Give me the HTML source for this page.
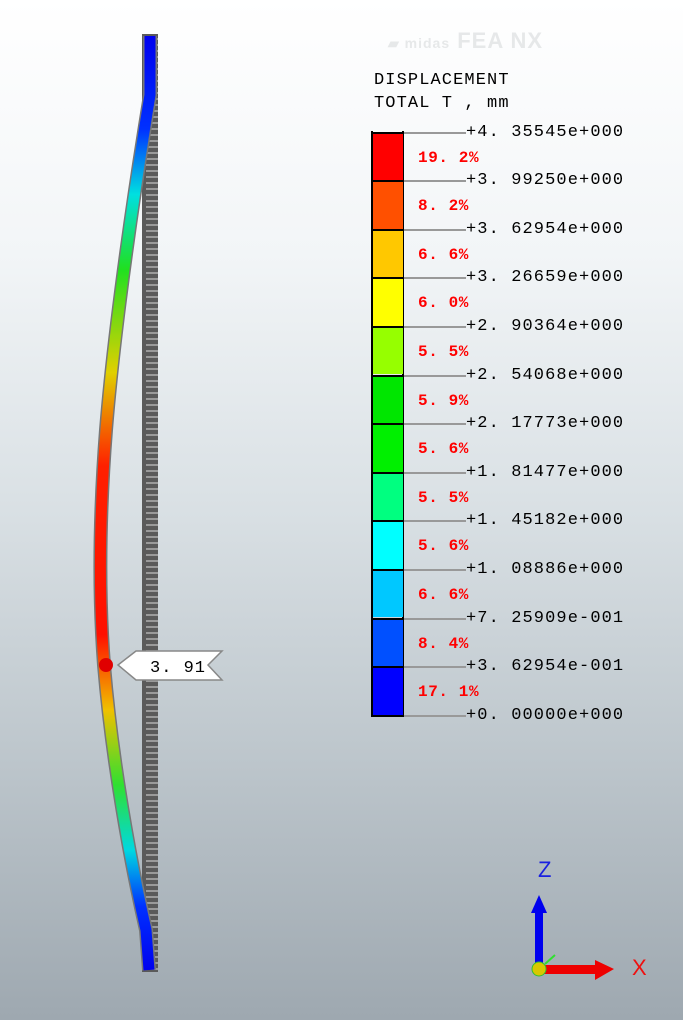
<!DOCTYPE html>
<html><head><style>
html,body{margin:0;padding:0}
body{width:683px;height:1020px;position:relative;overflow:hidden;
background:linear-gradient(to bottom,#ffffff 0%,#f2f5f7 25%,#d9e0e4 50%,#bcc5cb 75%,#9ea8b0 100%);
font-family:"Liberation Mono",monospace;}
.t{position:absolute;font-size:17px;letter-spacing:1.1px;color:#000;line-height:1;white-space:pre}
.p{position:absolute;font-size:16px;letter-spacing:0.6px;color:#ff0000;line-height:1;font-weight:bold;white-space:pre}
.seg{position:absolute;left:373px;width:30px;border-top:2px solid #000}
.ln{position:absolute;left:404px;width:62px;height:2px;background:#999}
</style></head><body>
<div style="position:absolute;left:388px;top:28px;font-family:'Liberation Sans',sans-serif;font-weight:bold;font-size:22px;color:#e6e8e9;letter-spacing:1px"><span style="font-size:14px">▰ midas</span> FEA NX</div>
<div class="t" style="left:374px;top:72px">DISPLACEMENT</div>
<div class="t" style="left:374px;top:95px">TOTAL T , mm</div>
<div style="position:absolute;left:371px;top:131px;width:33px;height:586px;border:2px solid #000;border-top:none;box-sizing:border-box"></div>
<div id="lg"></div>
<svg width="683" height="1020" style="position:absolute;left:0;top:0">
<defs>
<linearGradient id="g" x1="0" y1="35" x2="0" y2="972" gradientUnits="userSpaceOnUse">
<stop offset="0" stop-color="#0000ee"/><stop offset="0.1" stop-color="#0030ff"/>
<stop offset="0.17" stop-color="#00e0e0"/><stop offset="0.25" stop-color="#20e020"/>
<stop offset="0.36" stop-color="#e0d000"/><stop offset="0.46" stop-color="#ff2000"/>
<stop offset="0.64" stop-color="#ff1000"/><stop offset="0.72" stop-color="#f0c000"/>
<stop offset="0.8" stop-color="#30e030"/><stop offset="0.87" stop-color="#00d8e0"/>
<stop offset="0.93" stop-color="#0030ff"/><stop offset="1" stop-color="#0000ee"/>
</linearGradient>
<pattern id="m" width="16" height="6" patternUnits="userSpaceOnUse"><rect width="16" height="6" fill="#5a5a5a"/><rect x="2" y="2" width="12" height="2" fill="#9a9a9a"/></pattern>
</defs>
<rect x="142" y="34" width="16" height="938" fill="url(#m)"/>
<path d="M150,36 L150,95 C136,180 115,320 106,430 C99,520 99,600 104,665 C112,760 130,860 146,930 L149,970" fill="none" stroke="#777" stroke-width="14"/>
<path d="M150,36 L150,95 C136,180 115,320 106,430 C99,520 99,600 104,665 C112,760 130,860 146,930 L149,970" fill="none" stroke="url(#g)" stroke-width="11"/>
<circle cx="106" cy="665" r="7" fill="#e00000"/>
<path d="M118,665 L136,651 L222,651 L208,665 L222,680 L136,680 Z" fill="#fff" stroke="#888" stroke-width="1.5"/>
<text x="150" y="672" font-family="Liberation Mono,monospace" font-size="17" letter-spacing="1">3. 91</text>
<text x="538" y="877" font-family="Liberation Sans,sans-serif" font-size="22" fill="#1a20e0">Z</text>
<text x="632" y="975" font-family="Liberation Sans,sans-serif" font-size="22" fill="#ee1010">X</text>
<rect x="535" y="912" width="8" height="56" fill="#0000ee"/>
<path d="M531,913 L539,895 L547,913 Z" fill="#0000ee"/>
<rect x="542" y="965" width="55" height="9" fill="#ee0000"/>
<path d="M595,960 L614,969 L595,980 Z" fill="#ee0000"/>
<path d="M545,964 L555,955" stroke="#30e030" stroke-width="2"/>
<circle cx="539" cy="969" r="7" fill="#d8c800" stroke="#30c030" stroke-width="1"/>
</svg>
<script>
var cols=["#ff0000","#ff5000","#ffc800","#ffff00","#96ff00","#00e600","#00f000","#00ff80","#00ffff","#00c8ff","#0050ff","#0000ff"];
var vals=["+4.35545e+000","+3.99250e+000","+3.62954e+000","+3.26659e+000","+2.90364e+000","+2.54068e+000","+2.17773e+000","+1.81477e+000","+1.45182e+000","+1.08886e+000","+7.25909e-001","+3.62954e-001","+0.00000e+000"];
var pc=["19.2%","8.2%","6.6%","6.0%","5.5%","5.9%","5.6%","5.5%","5.6%","6.6%","8.4%","17.1%"];
var h="",s=48.6;
for(var i=0;i<13;i++){var y=132.5+i*s;
 if(i<12){h+='<div class="seg" style="top:'+(y-1)+'px;height:'+(s-2)+'px;background:'+cols[i]+'"></div>';
 h+='<div class="p" style="left:418px;top:'+(y+17)+'px">'+pc[i].replace(".",". ")+'</div>';}
 h+='<div class="ln" style="top:'+(y-1)+'px"></div>';
 h+='<div class="t" style="left:466px;top:'+(y-9)+'px">'+vals[i].replace(".",". ")+'</div>';}
document.getElementById("lg").innerHTML=h;
</script>
</body></html>
